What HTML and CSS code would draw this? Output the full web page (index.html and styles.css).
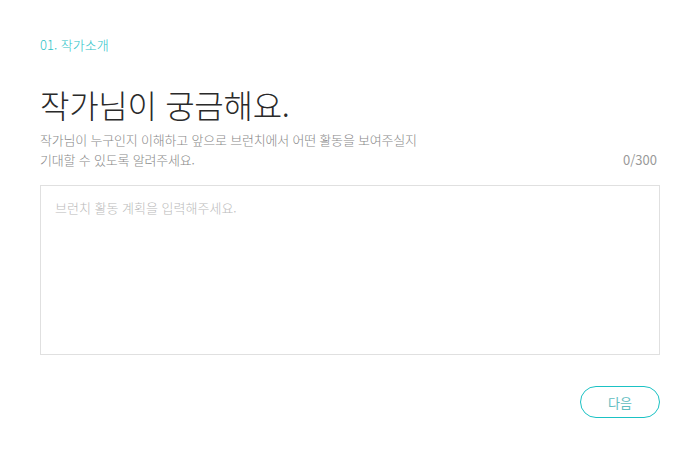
FILE: index.html
```html
<!DOCTYPE html>
<html lang="ko">
<head>
    <meta charset="UTF-8">
    <meta name="viewport" content="width=device-width, initial-scale=1.0">
    <title>작가소개</title>
    <link rel="stylesheet" href="styles.css">
</head>
<body>
    <div class="mainDiv">
        <div class="step">01. 작가소개</div>
        <h1 class="title">작가님이 궁금해요.</h1>

        <div class="desc_row">
            <p class="desc">작가님이 누구인지 이해하고 앞으로 브런치에서 어떤 활동을 보여주실지<br>기대할 수 있도록 알려주세요.</p>
            <span class="count">0/300</span>
        </div>

        <textarea class="plan" placeholder="브런치 활동 계획을 입력해주세요."></textarea>

        <div class="btn_row">
            <button class="next">다음</button>
        </div>
    </div>
</body>
</html>
```

FILE: styles.css
```css
*{
    box-sizing: border-box;
}
body{
    margin: 0;
    background-color: #fff;
    font-family: "Noto Sans CJK KR", "Liberation Sans", sans-serif;
}
.mainDiv{
    padding: 35px 40px 0 40px;
    display: flex;
    flex-direction: column;
}
.step{
    color: #2dc3c7;
    font-size: 13px;
    font-weight: 300;
    line-height: 20px;
}
.title{
    margin: 29px 0 0 0;
    font-size: 32px;
    font-weight: 300;
    line-height: 40px;
    color: #2a2a2a;
    letter-spacing: -0.3px;
}
.desc_row{
    margin-top: 6px;
    display: flex;
    justify-content: space-between;
    align-items: flex-end;
}
.desc{
    margin: 0;
    color: #888;
    font-size: 13px;
    line-height: 20px;
    font-weight: 300;
    letter-spacing: -0.2px;
}
.count{
    color: #999;
    font-size: 13px;
    line-height: 20px;
    margin-right: 3px;
}
.plan{
    margin-top: 15px;
    width: 620px;
    height: 170px;
    border: 1px solid #e0e0e0;
    padding: 12px 14px;
    font-family: inherit;
    font-size: 13px;
    line-height: 20px;
    resize: none;
    outline: none;
}
.plan::placeholder{
    color: #bbb;
    font-weight: 300;
}
.btn_row{
    margin-top: 31px;
    width: 620px;
    display: flex;
    justify-content: flex-end;
}
.next{
    width: 80px;
    height: 32px;
    border: 1px solid #1bc2c4;
    border-radius: 16px;
    background-color: #fff;
    color: #5fbdbf;
    font-family: inherit;
    font-size: 13px;
    cursor: pointer;
}
```
